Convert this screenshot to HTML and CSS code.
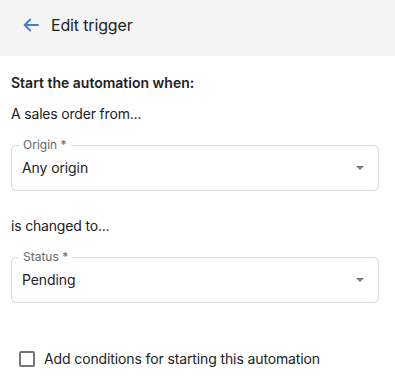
FILE: index.html
```html
<!DOCTYPE html>
<html lang="en">
<head>
<meta charset="utf-8">
<title>Edit trigger</title>
<link rel="stylesheet" href="styles.css">
</head>
<body>
<header class="topbar">
  <svg class="back" width="16" height="14" viewBox="0 0 16 14" aria-hidden="true">
    <path d="M15 7H1.8M7.2 1.5L1.6 7l5.6 5.5" fill="none" stroke="#3b7fd9" stroke-width="1.8" stroke-linecap="round" stroke-linejoin="round"/>
  </svg>
  <h1 class="title">Edit trigger</h1>
</header>
<main class="content">
  <p class="heading">Start the automation when:</p>
  <p class="text text-first">A sales order from...</p>
  <div class="field field-origin">
    <span class="field-label">Origin *</span>
    <span class="field-value">Any origin</span>
    <span class="caret"></span>
  </div>
  <p class="text text-changed">is changed to...</p>
  <div class="field field-status">
    <span class="field-label">Status *</span>
    <span class="field-value">Pending</span>
    <span class="caret"></span>
  </div>
  <label class="check-row">
    <span class="checkbox"></span>
    <span class="check-text">Add conditions for starting this automation</span>
  </label>
</main>
</body>
</html>
```
FILE: styles.css
```css
* { box-sizing: border-box; }
html, body { margin: 0; padding: 0; background: #fff; }
body {
  font-family: Inter, "Noto Sans", "Liberation Sans", sans-serif;
  color: #222;
  font-size: 14px;
  line-height: 20px;
  width: 395px;
}
.topbar {
  height: 56px;
  background: #f4f4f4;
  display: flex;
  align-items: center;
  padding-left: 23px;
  gap: 12px;
}
.back { display: block; margin-top: -6px; }
.title {
  margin: 0;
  font-size: 16px;
  font-weight: 400;
  line-height: 20px;
  margin-top: -6px;
  letter-spacing: -0.15px;
  color: #222;
}
.content {
  padding: 17px 16px 0 11px;
}
.heading {
  margin: 0;
  font-weight: 600;
}
.text { margin: 0; letter-spacing: -0.18px; }
.text-first { margin-top: 11px; }
.text-changed { margin-top: 25px; }
.field {
  position: relative;
  height: 46px;
  border: 1px solid #dadada;
  border-radius: 5px;
  display: flex;
  align-items: center;
  justify-content: space-between;
  padding: 0 14px 0 10px;
}
.field-origin { margin-top: 21px; }
.field-status { margin-top: 21px; }
.field-label {
  position: absolute;
  top: -8px;
  left: 7px;
  padding: 0 4px;
  background: #fff;
  font-size: 12px;
  line-height: 14px;
  color: #666;
}
.field-value {
  font-size: 14px;
  letter-spacing: -0.1px;
  color: #222;
}
.caret {
  width: 0;
  height: 0;
  border-left: 4.5px solid transparent;
  border-right: 4.5px solid transparent;
  border-top: 4.5px solid #777;
}
.check-row {
  display: flex;
  align-items: center;
  gap: 9px;
  margin-top: 46px;
  padding-left: 8px;
}
.checkbox {
  width: 16px;
  height: 16px;
  border: 2px solid #767676;
  border-radius: 2px;
  flex: none;
}
.check-text { color: #222; letter-spacing: -0.12px; }
```
